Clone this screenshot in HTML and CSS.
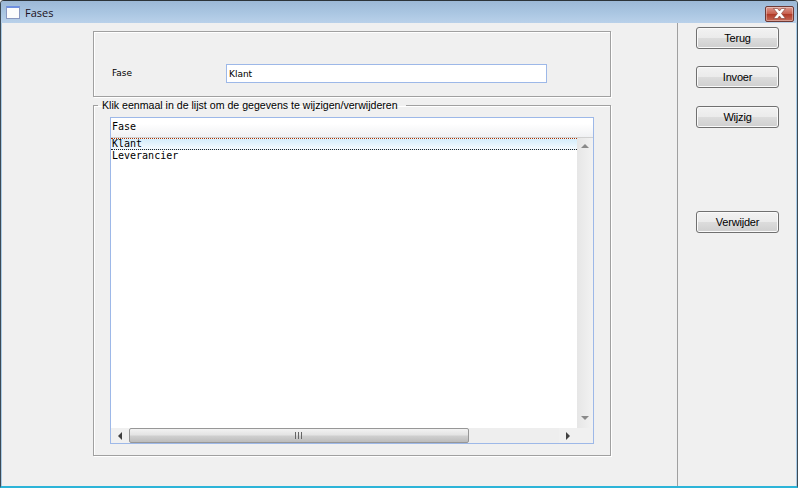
FILE: index.html
```html
<!DOCTYPE html>
<html lang="en">
<head>
  <meta charset="UTF-8">
  <meta name="viewport" content="width=device-width, initial-scale=1.0">
  <title>Fases</title>
  <link rel="stylesheet" href="styles.css">
</head>
<body>
  <div class="window">
    <div class="titlebar">
      <div class="app-icon"></div>
      <div class="window-title">Fases</div>
      <div class="close-btn">
        <svg width="17" height="11" viewBox="0 0 17 11">
          <path d="M2.500 0.500h4l2 2.500 2-2.500h4l-4 5 4 5h-4l-2-2.500-2 2.500h-4l4-5z" fill="#fff" stroke="#7a3a30" stroke-width="0.6"/>
        </svg>
      </div>
    </div>

    <div class="client">
      <div class="main">
        <div class="group group-form">
          <label class="field-label" for="fase">Fase</label>
          <input class="field-input" type="text" id="fase" value="Klant">
        </div>

        <fieldset class="group group-list">
          <legend>Klik eenmaal in de lijst om de gegevens te wijzigen/verwijderen</legend>
          <div class="list">
            <div class="list-head">Fase</div>
            <div class="list-body">
              <div class="rows">
                <div class="row row-selected">Klant</div>
                <div class="row">Leverancier</div>
              </div>
              <div class="vscroll">
                <div class="arrow arrow-up"></div>
                <div class="arrow arrow-down"></div>
              </div>
            </div>
            <div class="hscroll">
              <div class="hscroll-btn"><div class="arrow arrow-left"></div></div>
              <div class="thumb">
                <svg width="8" height="7" viewBox="0 0 8 7">
                  <path d="M0.500 0v7M3.500 0v7M6.500 0v7" stroke="#666" stroke-width="1"/>
                </svg>
              </div>
              <div class="hscroll-track"></div>
              <div class="hscroll-btn"><div class="arrow arrow-right"></div></div>
              <div class="scroll-corner"></div>
            </div>
          </div>
        </fieldset>
      </div>

      <div class="side">
        <button class="btn btn-terug">Terug</button>
        <button class="btn btn-invoer">Invoer</button>
        <button class="btn btn-wijzig">Wijzig</button>
        <button class="btn btn-verwijder">Verwijder</button>
      </div>
    </div>
  </div>
</body>
</html>
```

FILE: styles.css
```css
html, body {
  margin: 0;
  height: 100%;
  overflow: hidden;
}
body {
  font-family: "Liberation Sans", Arial, sans-serif;
  background: #f0f0f0;
}
.window {
  box-sizing: border-box;
  width: 798px;
  height: 488px;
  display: flex;
  flex-direction: column;
  background: #f0f0f0;
  border: 1px solid #3c4a55;
  border-top-color: #2c3338;
  border-bottom: 2px solid #2cb4d8;
  border-radius: 4px 4px 0 0;
  box-shadow: inset 1px 0 0 #a9cbe6, inset -1px 0 0 #a9cbe6;
}
.titlebar {
  height: 22px;
  flex-shrink: 0;
  display: flex;
  align-items: center;
  background: linear-gradient(180deg, #9cb8d6 0%, #a9c5e1 50%, #b9d1ea 100%);
  border-radius: 3px 3px 0 0;
}
.app-icon {
  box-sizing: border-box;
  width: 14px;
  height: 13px;
  margin-left: 5px;
  margin-top: 1px;
  background: #fdfdfd;
  border: 1px solid #8a98c0;
  border-top: 2px solid #6f90e0;
}
.window-title {
  margin-left: 5px;
  font-family: "Open Sans", sans-serif;
  font-size: 11px;
  color: #1c1020;
}
.close-btn {
  box-sizing: border-box;
  width: 29px;
  height: 16px;
  margin-left: auto;
  margin-right: 3px;
  margin-top: 3px;
  display: flex;
  align-items: center;
  justify-content: center;
  background: linear-gradient(180deg, #dc9a90 0%, #c8604f 48%, #b03a28 52%, #c66a58 100%);
  border: 1px solid #6e3a36;
  border-radius: 2px;
  box-shadow: inset 0 0 0 1px rgba(255, 255, 255, 0.35);
}
.client {
  flex: 1;
  display: flex;
  min-height: 0;
}
.main {
  box-sizing: border-box;
  width: 677px;
  padding: 8px 0 0 92px;
  border-right: 1px solid #a0a0a0;
  flex-shrink: 0;
}
.group {
  box-sizing: border-box;
  width: 518px;
  margin: 0;
  border: 1px solid #a0a0a0;
  box-shadow: 1px 1px 0 #fff, inset 1px 1px 0 #fff;
}
.group-form {
  height: 66px;
  padding-top: 32px;
  display: flex;
  align-items: flex-start;
}
.field-label {
  width: 114px;
  padding-left: 18px;
  padding-top: 4px;
  flex-shrink: 0;
  box-sizing: border-box;
  font-family: "DejaVu Sans", sans-serif;
  font-size: 9px;
  color: #000;
}
.field-input {
  box-sizing: border-box;
  width: 321px;
  height: 19px;
  margin: 0 0 0 18px;
  padding: 0 0 0 2px;
  background: #fff;
  border: 1px solid #9db8e8;
  outline: none;
  font-family: "DejaVu Sans", sans-serif;
  font-size: 9px;
  color: #000;
}
.group-list {
  height: 357px;
  margin-top: 2px;
  padding: 0 16px 12px 16px;
  min-width: 0;
}
.group-list legend {
  margin-left: -12px;
  padding: 0 8px 0 4px;
  font-size: 10.600px;
  line-height: 13px;
  color: #000;
}
.list {
  box-sizing: border-box;
  width: 484px;
  height: 327px;
  margin-top: 5px;
  display: flex;
  flex-direction: column;
  background: #fff;
  border: 1px solid #9db8e8;
}
.list-head {
  box-sizing: border-box;
  height: 20px;
  flex-shrink: 0;
  padding: 3px 0 0 1px;
  font-family: "DejaVu Sans Mono", monospace;
  font-size: 10px;
  color: #000;
  background: linear-gradient(180deg, #fff 0%, #fff 30%, #f0f1f3 100%);
  border-bottom: 1px solid #d0d0d0;
}
.list-body {
  flex: 1;
  display: flex;
  min-height: 0;
}
.rows {
  flex: 1;
  font-family: "DejaVu Sans Mono", monospace;
  font-size: 10px;
  line-height: 12px;
  color: #000;
}
.row {
  padding-left: 1px;
  height: 12px;
}
.row-selected {
  box-sizing: border-box;
  height: 12px;
  line-height: 10px;
  background: linear-gradient(180deg, #d4edfb 0%, #f4fafe 100%);
  border-top: 1px dotted #a83000;
  border-bottom: 1px dotted #222;
}
.vscroll {
  box-sizing: border-box;
  width: 16px;
  flex-shrink: 0;
  display: flex;
  flex-direction: column;
  align-items: center;
  justify-content: space-between;
  padding: 6px 0 8px;
  background: linear-gradient(90deg, #e6e6e6 0%, #f2f2f2 100%);
}
.arrow {
  width: 0;
  height: 0;
  border-style: solid;
  border-color: transparent;
}
.arrow-up {
  border-width: 0 4px 4px 4px;
  border-bottom-color: #8a8a8a;
}
.arrow-down {
  border-width: 4px 4px 0 4px;
  border-top-color: #8a8a8a;
}
.arrow-left {
  border-width: 4px 4px 4px 0;
  border-right-color: #404040;
}
.arrow-right {
  border-width: 4px 0 4px 4px;
  border-left-color: #404040;
}
.hscroll {
  height: 15px;
  flex-shrink: 0;
  display: flex;
  background: #f0f0f0;
}
.hscroll-btn {
  width: 18px;
  flex-shrink: 0;
  display: flex;
  align-items: center;
  justify-content: center;
}
.thumb {
  box-sizing: border-box;
  width: 340px;
  flex-shrink: 0;
  display: flex;
  align-items: center;
  justify-content: center;
  background: linear-gradient(180deg, #f2f2f2 0%, #e4e4e4 45%, #cfcfcf 55%, #bcbcbc 100%);
  border: 1px solid #979797;
  border-radius: 2px;
}
.hscroll-track {
  flex: 1;
  background: #eeeeee;
}
.scroll-corner {
  width: 16px;
  flex-shrink: 0;
  background: #f0f0f0;
}
.side {
  flex: 1;
  display: flex;
  flex-direction: column;
  align-items: flex-start;
  padding: 4px 0 0 18px;
}
.btn {
  box-sizing: border-box;
  width: 83px;
  height: 22px;
  padding: 0;
  flex-shrink: 0;
  font-family: "Liberation Sans", Arial, sans-serif;
  font-size: 11px;
  letter-spacing: -0.2px;
  color: #000;
  background: linear-gradient(180deg, #f2f2f2 0%, #ebebeb 48%, #dcdcdc 52%, #cfcfcf 100%);
  border: 1px solid #707070;
  border-radius: 3px;
  box-shadow: inset 0 0 0 1px #fafafa;
}
.btn-invoer {
  margin-top: 17px;
}
.btn-wijzig {
  margin-top: 18px;
}
.btn-verwijder {
  margin-top: 83px;
}
```
